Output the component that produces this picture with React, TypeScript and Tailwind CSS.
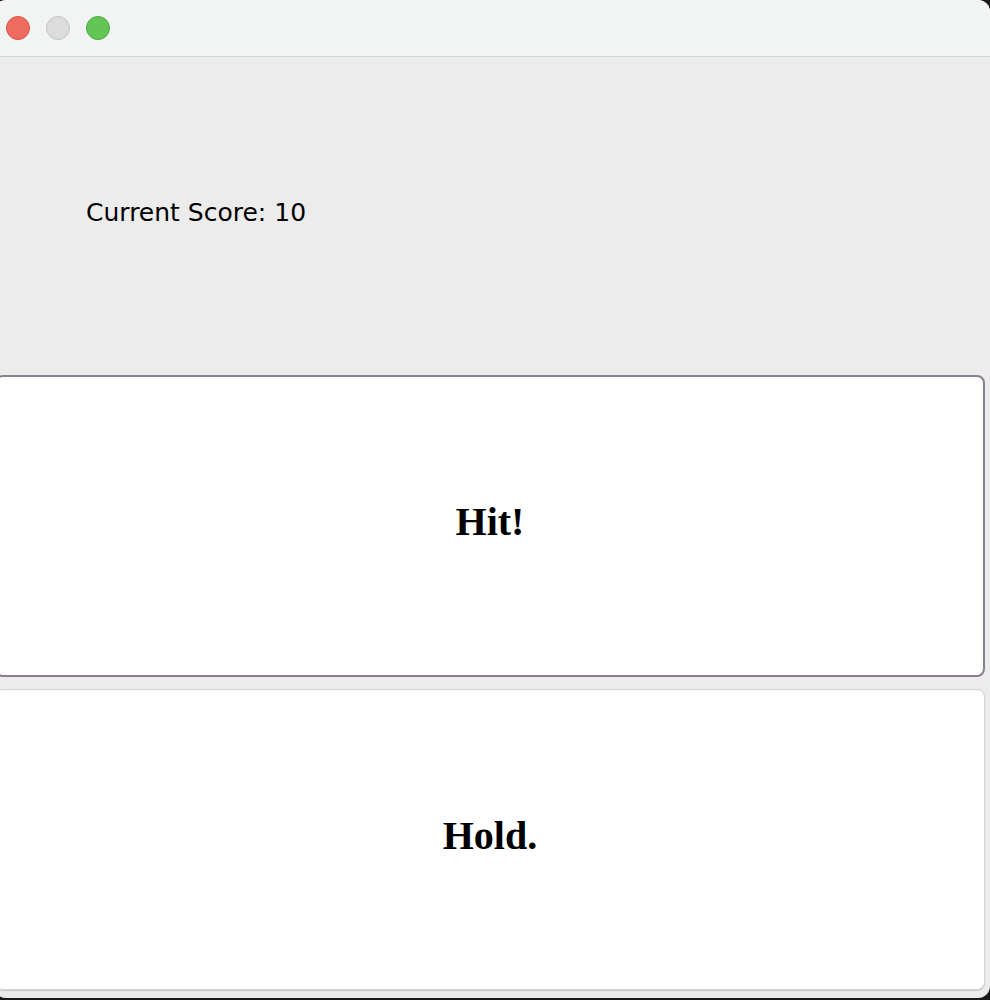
export default function App() {
  return (
    <div className="w-[990px] h-[1000px] bg-[#1a1a1a] overflow-hidden">
      <div className="ml-[-6px] w-[996px] h-[998px] rounded-[12px] overflow-hidden bg-[#ececec] flex flex-col">
        {/* title bar */}
        <div className="h-[57px] shrink-0 bg-[#f2f3f3] border-b border-[#d3d3d3] flex items-center gap-[16px] pl-[12px]">
          <div className="w-[24px] h-[24px] rounded-full bg-[#ee6b60] border border-[#d9544b]" />
          <div className="w-[24px] h-[24px] rounded-full bg-[#dcdcdc] border border-[#c4c4c4]" />
          <div className="w-[24px] h-[24px] rounded-full bg-[#62c554] border border-[#4eab43]" />
        </div>

        {/* score */}
        <div className="h-[318px] shrink-0 flex items-center pl-[92px] pb-[6px]">
          <span className="text-[25px] leading-[28px] text-black font-['DejaVu_Sans',sans-serif]">
            Current Score: 10
          </span>
        </div>

        {/* buttons */}
        <div className="flex flex-col gap-[12px] pl-[1px] pr-[5px]">
          <button className="h-[302px] pb-[8px] bg-white border-2 border-[#8b7e8e] rounded-[8px] flex items-center justify-center">
            <span className="text-[40px] font-bold text-black font-['Liberation_Serif',serif]">Hit!</span>
          </button>
          <button className="h-[301px] pb-[8px] bg-white border border-[#d2d2d2] rounded-[8px] shadow-[0_1px_1px_rgba(0,0,0,0.15)] flex items-center justify-center">
            <span className="text-[40px] font-bold text-black font-['Liberation_Serif',serif]">Hold.</span>
          </button>
        </div>
      </div>
    </div>
  );
}
